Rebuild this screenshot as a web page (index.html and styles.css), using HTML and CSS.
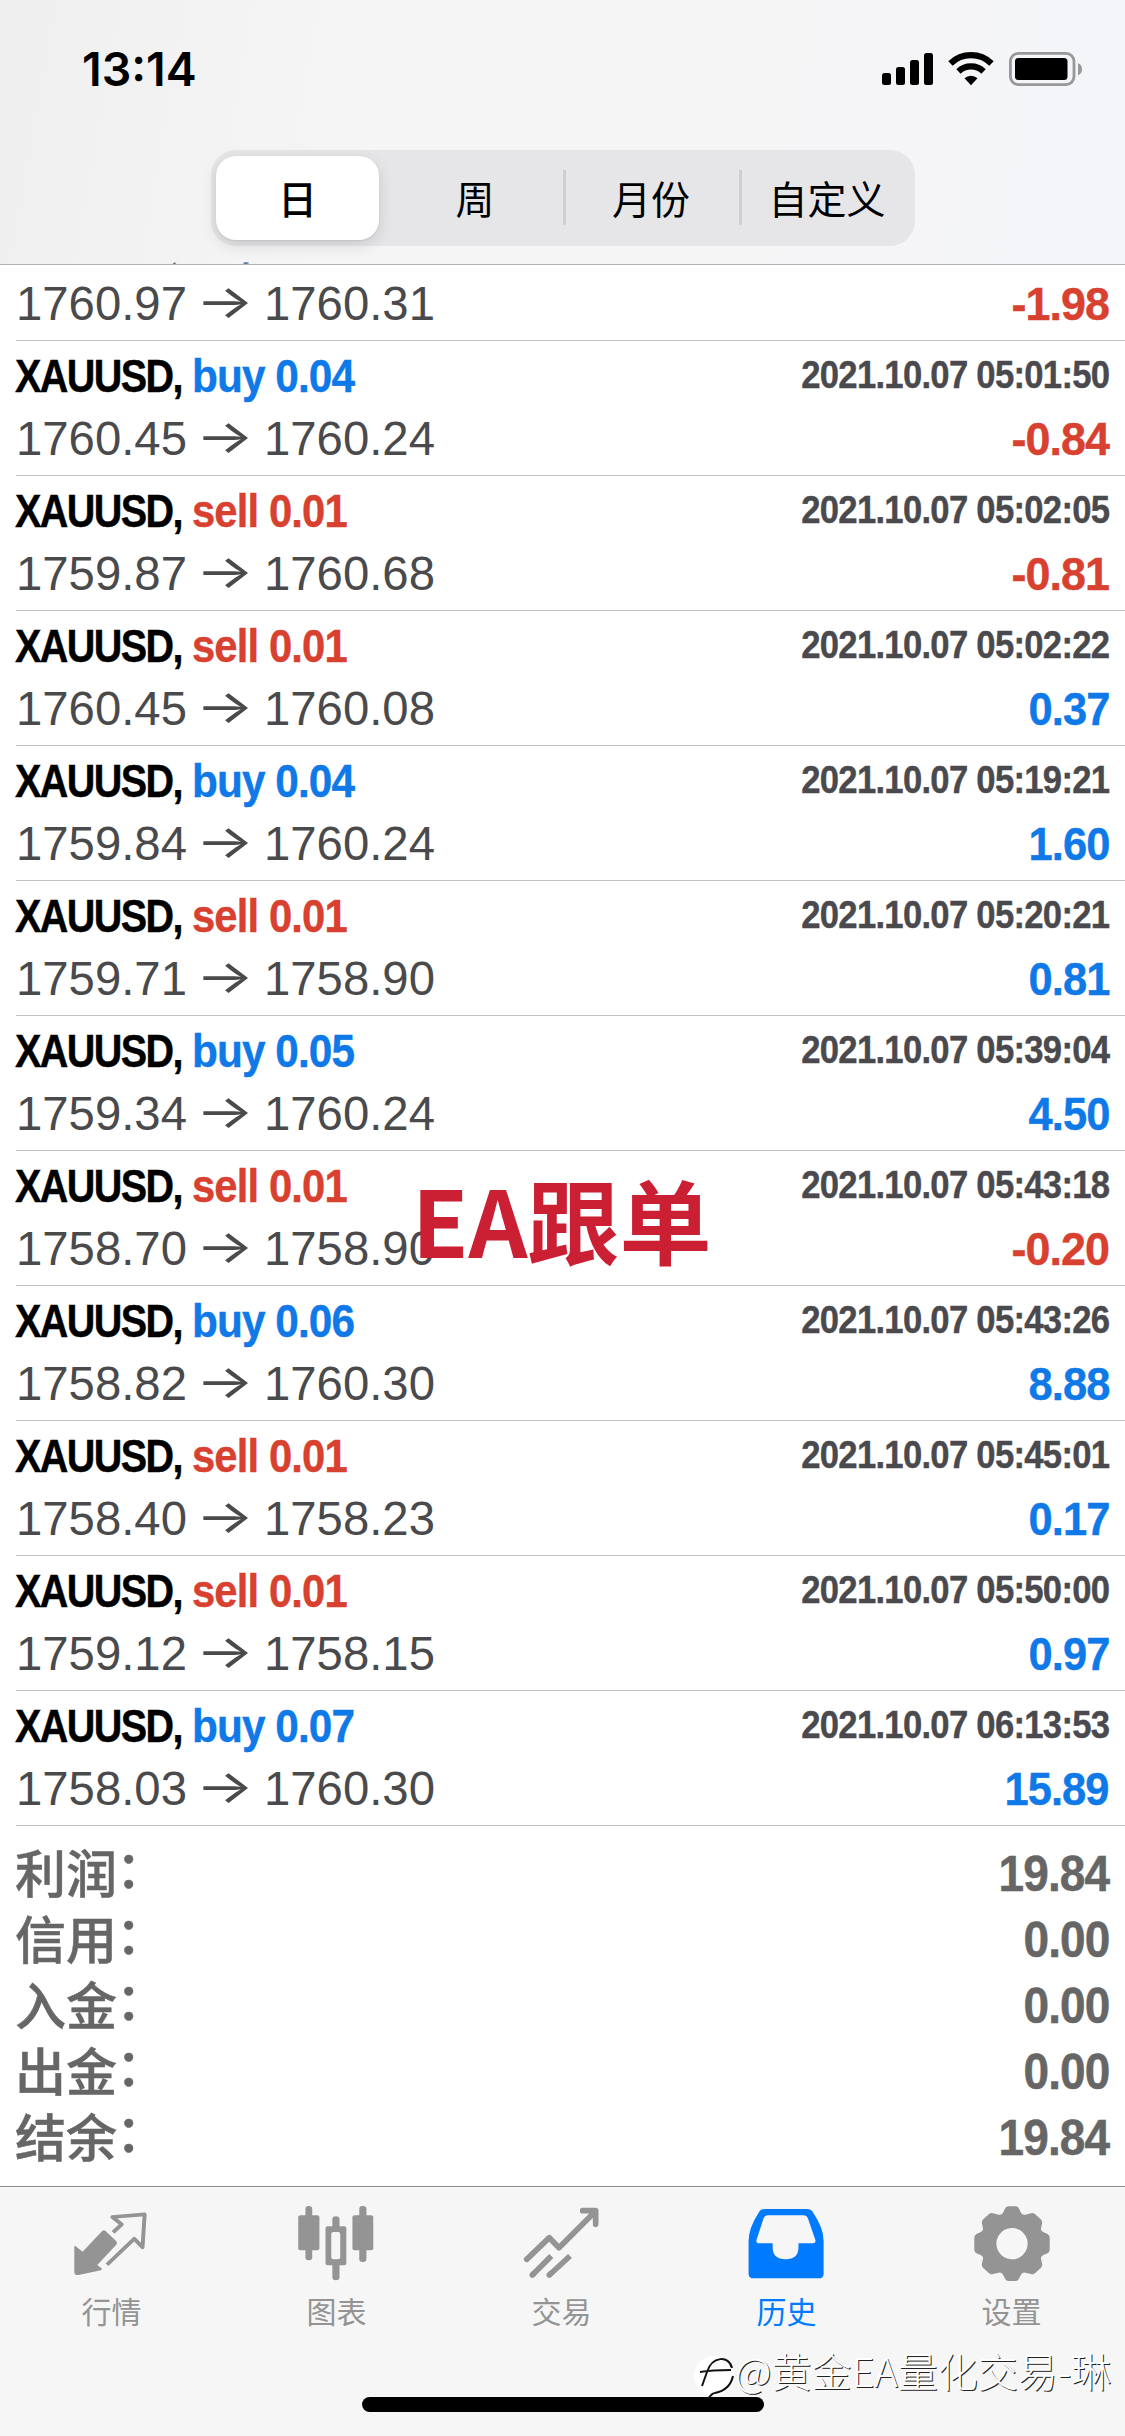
FILE: index.html
```html
<!DOCTYPE html>
<html lang="zh-CN">
<head>
<meta charset="utf-8">
<title>历史</title>
<link rel="stylesheet" href="styles.css">
</head>
<body>
<div class="screen">
  <header class="top">
    <div class="status">
      <span class="time">13:14</span>
      <svg class="status-icons" width="206" height="40" viewBox="880 50 206 40">
        <rect x="882" y="73" width="9" height="12" rx="2.500"/>
        <rect x="896" y="67" width="9" height="18" rx="2.500"/>
        <rect x="910" y="60" width="9" height="25" rx="2.500"/>
        <rect x="924" y="53" width="9" height="32" rx="2.500"/>
        <path d="M950.500 63.500a29.500 29.500 0 0 1 41 0M958.500 71.500a18 18 0 0 1 25 0" fill="none" stroke="#000" stroke-width="6.300"/>
        <path d="M971 85.300l-6.500-7a9.500 9.500 0 0 1 13 0z"/>
        <rect x="1010.400" y="53.400" width="63.600" height="31.200" rx="8" fill="none" stroke="#98989a" stroke-width="2.800"/>
        <rect x="1015" y="58" width="52.500" height="22" rx="3.500"/>
        <path d="M1078 63q4 2 4 6.200t-4 6.200z" fill="#98989a"/>
      </svg>
    </div>
    <nav class="segments">
      <span class="segment on">日</span>
      <span class="segment">周</span>
      <span class="segment ruled">月份</span>
      <span class="segment ruled">自定义</span>
    </nav>
  </header>
  <main class="list">
    <div class="trade clipped"><div class="line"><span class="price">1760.97</span><span class="arrow">→</span><span class="price">1760.31</span><span class="value sell">-1.98</span></div></div>
    <div class="trade"><div class="line head"><span class="sym">XAUUSD,</span><span class="side buy">buy 0.04</span><span class="date">2021.10.07 05:01:50</span></div><div class="line"><span class="price">1760.45</span><span class="arrow">→</span><span class="price">1760.24</span><span class="value sell">-0.84</span></div></div>
    <div class="trade"><div class="line head"><span class="sym">XAUUSD,</span><span class="side sell">sell 0.01</span><span class="date">2021.10.07 05:02:05</span></div><div class="line"><span class="price">1759.87</span><span class="arrow">→</span><span class="price">1760.68</span><span class="value sell">-0.81</span></div></div>
    <div class="trade"><div class="line head"><span class="sym">XAUUSD,</span><span class="side sell">sell 0.01</span><span class="date">2021.10.07 05:02:22</span></div><div class="line"><span class="price">1760.45</span><span class="arrow">→</span><span class="price">1760.08</span><span class="value buy">0.37</span></div></div>
    <div class="trade"><div class="line head"><span class="sym">XAUUSD,</span><span class="side buy">buy 0.04</span><span class="date">2021.10.07 05:19:21</span></div><div class="line"><span class="price">1759.84</span><span class="arrow">→</span><span class="price">1760.24</span><span class="value buy">1.60</span></div></div>
    <div class="trade"><div class="line head"><span class="sym">XAUUSD,</span><span class="side sell">sell 0.01</span><span class="date">2021.10.07 05:20:21</span></div><div class="line"><span class="price">1759.71</span><span class="arrow">→</span><span class="price">1758.90</span><span class="value buy">0.81</span></div></div>
    <div class="trade"><div class="line head"><span class="sym">XAUUSD,</span><span class="side buy">buy 0.05</span><span class="date">2021.10.07 05:39:04</span></div><div class="line"><span class="price">1759.34</span><span class="arrow">→</span><span class="price">1760.24</span><span class="value buy">4.50</span></div></div>
    <div class="trade"><div class="line head"><span class="sym">XAUUSD,</span><span class="side sell">sell 0.01</span><span class="date">2021.10.07 05:43:18</span></div><div class="line"><span class="price">1758.70</span><span class="arrow">→</span><span class="price">1758.90</span><span class="value sell">-0.20</span></div><span class="stamp">EA跟单</span></div>
    <div class="trade"><div class="line head"><span class="sym">XAUUSD,</span><span class="side buy">buy 0.06</span><span class="date">2021.10.07 05:43:26</span></div><div class="line"><span class="price">1758.82</span><span class="arrow">→</span><span class="price">1760.30</span><span class="value buy">8.88</span></div></div>
    <div class="trade"><div class="line head"><span class="sym">XAUUSD,</span><span class="side sell">sell 0.01</span><span class="date">2021.10.07 05:45:01</span></div><div class="line"><span class="price">1758.40</span><span class="arrow">→</span><span class="price">1758.23</span><span class="value buy">0.17</span></div></div>
    <div class="trade"><div class="line head"><span class="sym">XAUUSD,</span><span class="side sell">sell 0.01</span><span class="date">2021.10.07 05:50:00</span></div><div class="line"><span class="price">1759.12</span><span class="arrow">→</span><span class="price">1758.15</span><span class="value buy">0.97</span></div></div>
    <div class="trade"><div class="line head"><span class="sym">XAUUSD,</span><span class="side buy">buy 0.07</span><span class="date">2021.10.07 06:13:53</span></div><div class="line"><span class="price">1758.03</span><span class="arrow">→</span><span class="price">1760.30</span><span class="value buy">15.89</span></div></div>
    <div class="summary">
      <div class="total"><span>利润<span class="colon">：</span></span><span class="sum">19.84</span></div>
      <div class="total"><span>信用<span class="colon">：</span></span><span class="sum">0.00</span></div>
      <div class="total"><span>入金<span class="colon">：</span></span><span class="sum">0.00</span></div>
      <div class="total"><span>出金<span class="colon">：</span></span><span class="sum">0.00</span></div>
      <div class="total"><span>结余<span class="colon">：</span></span><span class="sum">19.84</span></div>
    </div>
  </main>
  <footer class="tabs">
    <div class="tab">
      <svg class="icon" viewBox="197 98 234 252" preserveAspectRatio="none">
        <path fill="currentColor" d="M209 229q0-4 4-1l19 16 54-61q5-6 10-1l30 31q4 5 0 10l-53 61 12 10q3 4-2 6l-62 14q-12 2-12-10z"/>
        <path fill="none" stroke="currentColor" stroke-width="11" stroke-linejoin="round" d="M317 186l24-24-26-22 90-8-6 99-23-26-76 78"/>
      </svg>
      <span>行情</span>
    </div>
    <div class="tab">
      <svg class="icon" viewBox="825 98 234 252" preserveAspectRatio="none">
        <g fill="currentColor">
          <rect x="834" y="135" width="59" height="105" rx="6"/><rect x="854" y="107" width="19" height="163" rx="9"/>
          <rect x="985" y="135" width="58" height="105" rx="6"/><rect x="1004" y="107" width="20" height="168" rx="9"/>
          <path fill-rule="evenodd" d="M929 168v-20q0-10 10-10t10 10v20h13q6 0 6 6v105q0 6-6 6h-13v35q0 10-10 10t-10-10v-35h-13q-6 0-6-6V174q0-6 6-6zm3 17q-6 0-6 6v70q0 6 6 6h13q6 0 6-6v-70q0-6-6-6z"/>
        </g>
      </svg>
      <span>图表</span>
    </div>
    <div class="tab">
      <svg class="icon" viewBox="25 24 252 252">
        <path fill="none" stroke="currentColor" stroke-width="17" stroke-linecap="round" stroke-linejoin="round" d="M45 193l68-65 29 30L250 50M213 47h39v41M62 240l3-3M113 240l3-3"/>
        <path fill="none" stroke="currentColor" stroke-width="17" d="M62 240l57-57M113 240l62-57"/>
      </svg>
      <span>交易</span>
    </div>
    <div class="tab active">
      <svg class="icon" viewBox="511 98 234 252" preserveAspectRatio="none">
        <path fill="currentColor" fill-rule="evenodd" d="M566 116h118q12 0 17 11 29 46 29 85v98q0 14-14 14H535q-14 0-14-14v-98q0-39 28-85 5-11 17-11zm8 19q-8 0-11 8l-20 66q-2 10 8 10h37v12q0 36 36 36t36-36v-12h40q9 0 7-10l-21-66q-3-8-11-8z"/>
      </svg>
      <span>历史</span>
    </div>
    <div class="tab">
      <svg class="icon" viewBox="1135 98 234 252" preserveAspectRatio="none">
        <path fill="currentColor" fill-rule="evenodd" d="M1242 108h20q6 0 9 6l6 13q4 8 12 6l16-4q6-2 11 2l16 16q5 5 4 11l-3 15q-2 8 6 12l12 6q6 4 6 11v36q0 7-6 11l-12 5q-8 5-6 12l3 15q1 7-4 12l-16 16q-5 4-11 2l-16-4q-8-2-12 6l-6 13q-3 6-9 6h-20q-6 0-9-6l-6-13q-4-8-12-6l-16 4q-6 2-11-2l-16-16q-5-5-4-12l3-15q2-7-6-12l-12-5q-6-4-6-11v-36q0-7 6-11l12-6q8-4 6-12l-3-15q-1-6 4-11l16-16q5-4 11-2l16 4q8 2 12-6l6-13q3-6 9-6zm10 65a43.500 47 0 1 0 .1 0z"/>
      </svg>
      <span>设置</span>
    </div>
    <div class="home-bar"></div>
    <div class="watermark">
      <svg width="41" height="48" viewBox="0 0 41 48">
        <circle cx="20" cy="24" r="20" fill="#fff"/>
        <path d="M6 20q12-2 31-2M13 20l-5 14M13 20C18 4 35 3 38 16M39 24q-3 14-18 17-3 0-7 6" fill="none" stroke="#111" stroke-width="2"/>
      </svg>
      <span>@黄金EA量化交易-琳</span>
    </div>
  </footer>
</div>
</body>
</html>
```
FILE: styles.css
```css
* { box-sizing: border-box; }

body {
  margin: 0;
  background: #fff;
  font-family: "Liberation Sans", "Noto Sans CJK SC", sans-serif;
}

.screen {
  width: 1125px;
  height: 2436px;
  display: flex;
  flex-direction: column;
  overflow: hidden;
}

/* Header */
.top {
  flex: none;
  height: 265px;
  border-bottom: 1px solid #b2b2b4;
  /* the two specks are the tails of the row scrolled under the bar */
  background:
    radial-gradient(circle at 50% 100%, #33405a, transparent 70%) 172px 262px / 5px 2px no-repeat,
    radial-gradient(circle at 50% 100%, #1f4f92, transparent 70%) 241px 262px / 10px 2px no-repeat,
    linear-gradient(100deg, #efeff0 0, #f6f5f6 30%, #f5f5f6 65%, #f4f5f9 100%);
}

.status {
  display: flex;
  justify-content: space-between;
  height: 150px;
  padding: 41px 39px 0 82px;
}

.time {
  font: 600 46.500px/56px Inter, sans-serif;
}

.status-icons { margin-top: 9px; }

.segments {
  display: grid;
  grid-template-columns: repeat(4, 1fr);
  width: 704px;
  height: 96px;
  margin-left: 211px;
  border-radius: 25px;
  background: #e6e6e8;
}

.segment {
  display: flex;
  align-items: center;
  justify-content: center;
  padding-bottom: 3px;
  font: 400 39px/60px "Noto Sans CJK SC", sans-serif;
}

.segment.on {
  margin: 6px 8px 6px 5px;
  border-radius: 20px;
  background: #fff;
  box-shadow: 0 5px 16px rgba(0, 0, 0, .12), 0 1px 2px rgba(0, 0, 0, .08);
  font-weight: 500;
}

.segment.ruled {
  background: linear-gradient(#cfcfd2, #cfcfd2) 0 20px / 3px 55px no-repeat;
}

/* Trades */
.list {
  flex: none;
  height: 1921px;
}

.trade {
  position: relative;
  height: 135px;
  margin-left: 16px;
  padding: 3px 16px 0 0;
  border-bottom: 1px solid #c0c0c2;
}

.clipped {
  height: 76px;
  padding-top: 7px;
}

.line {
  display: flex;
  height: 63px;
  line-height: 63px;
  font-size: 47px;
  white-space: pre;
}

.head {
  font-weight: 700;
  -webkit-text-stroke: .4px currentColor;
}

.sym {
  width: 177px;
  margin: 0 0 0 -1px;
  letter-spacing: -1.900px;
  transform: scaleX(.842);
  transform-origin: 0 50%;
}

.side {
  letter-spacing: -1px;
  transform: scaleX(.9);
  transform-origin: 0 50%;
}

.side.sell { transform: scaleX(.89); }

.date {
  margin-left: auto;
  font-size: 38.500px;
  line-height: 61px;
  letter-spacing: -.800px;
  color: #4a4a4e;
  transform: scaleX(.9);
  transform-origin: 100% 50%;
}

.price {
  width: 180px;
  font-size: 47.300px;
  color: #4a4a4c;
}

.arrow {
  width: 68px;
  font-family: Inter, sans-serif;
  text-align: center;
  color: #4a4a4c;
  transform: translate(-5px, -3px) scaleX(1.3);
}

.value {
  margin-left: auto;
  font-weight: 700;
  letter-spacing: -1px;
  -webkit-text-stroke: .4px currentColor;
  transform: scaleX(.925);
  transform-origin: 100% 50%;
}

.value.sell { transform: scaleX(.955); }

.buy { color: #0f79e8; }
.sell { color: #d8402f; }

.stamp {
  position: absolute;
  left: 396px;
  top: 12px;
  font: 700 92px/110px "Noto Sans CJK SC", sans-serif;
  color: #cb1f33;
  white-space: nowrap;
}

/* Totals */
.summary {
  padding: 12px 16px 0 15px;
  color: #666;
}

.total {
  display: flex;
  justify-content: space-between;
  height: 66px;
  font: 500 51px/66px "Noto Sans CJK SC", sans-serif;
  -webkit-text-stroke: .5px currentColor;
}

.colon {
  display: inline-block;
  transform: translate(-1px, -5px);
}

.sum {
  font: 700 50px/72px "Liberation Sans", sans-serif;
  letter-spacing: -1px;
  transform: scaleX(.92);
  transform-origin: 100% 50%;
}

/* Tab bar */
.tabs {
  position: relative;
  display: grid;
  grid-template-columns: repeat(5, 1fr);
  flex: 1;
  border-top: 1px solid #8c8c8e;
  background: #f6f6f6;
}

.tab {
  display: flex;
  flex-direction: column;
  align-items: center;
  padding: 16px 2px 0 0;
  font: 400 30px/40px "Noto Sans CJK SC", sans-serif;
  color: #949494;
}

.tab.active { color: #007aff; }

.icon {
  width: 84px;
  height: 84px;
  margin-bottom: 3px;
}

.home-bar {
  position: absolute;
  left: 362px;
  bottom: 24px;
  width: 402px;
  height: 15px;
  border-radius: 8px;
  background: #000;
}

.watermark {
  position: absolute;
  left: 694px;
  bottom: 42px;
  display: flex;
  align-items: center;
  font: 300 40px/48px "Noto Sans CJK SC", sans-serif;
  color: #fff;
  text-shadow: 1px 1px 0 #222;
  white-space: nowrap;
}

.watermark svg {
  position: relative;
  top: 6px;
}
```
